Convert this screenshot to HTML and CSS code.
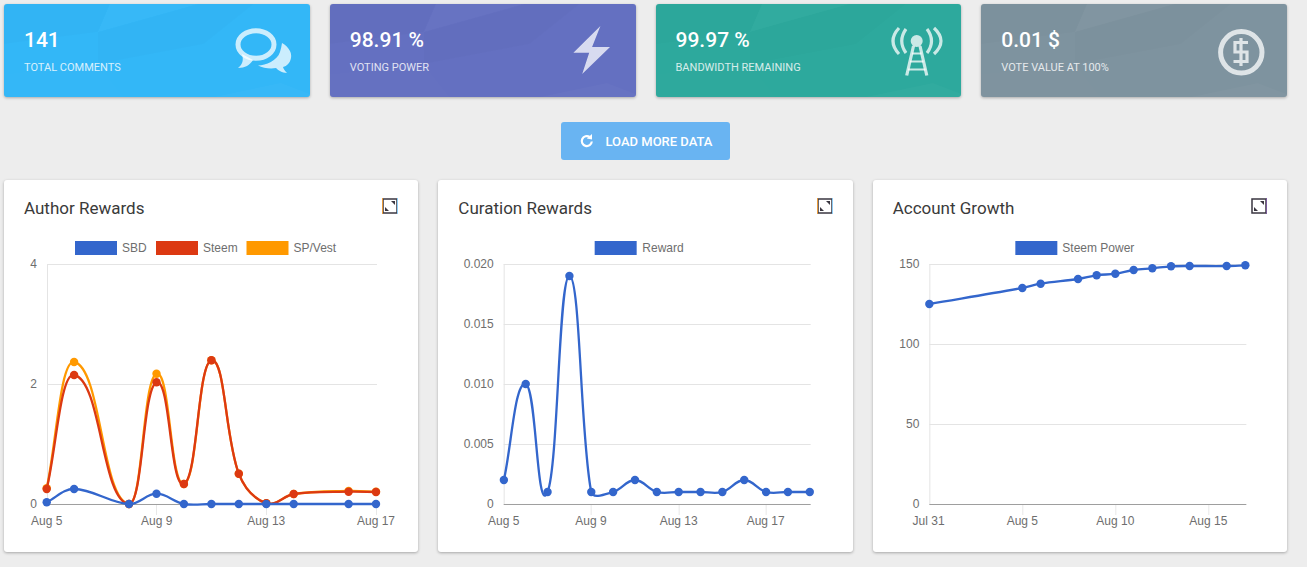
FILE: index.html
```html
<!DOCTYPE html>
<html lang="en">
<head>
<meta charset="utf-8">
<title>Dashboard</title>
<link rel="stylesheet" href="styles.css">
</head>
<body>
<main class="page">
  <section class="stats">
    <article class="stat stat-blue">
      <svg class="poly" viewBox="0 0 306 93" preserveAspectRatio="none"><polygon class="p-dark" points="0,0 106,0 94,28 0,40"/><polygon class="p-light" points="106,0 194,0 94,28"/><polygon class="p-dark" points="94,28 194,0 250,0 200,40 94,60"/><polygon class="p-light" points="210,93 277,79 306,90 306,93"/><polygon class="p-faint" points="0,70 94,60 120,93 0,93"/></svg>
      <div class="stat-text"><div class="stat-value">141</div><div class="stat-label">TOTAL COMMENTS</div></div>
      <svg class="stat-icon" viewBox="234 20 60 60">
        <ellipse class="ic-stroke ic-w5" cx="256" cy="43.5" rx="18" ry="13.7"/>
        <path class="ic-fill" d="M242 53C244 60 242 64 238 67C245 67 250 64 253 59Z"/>
        <path class="ic-fill" d="M282 42C289 46 292 52 291 57C290 62 287 65 283 66C283.500 68 285 70 287 72C282 72 278 69 276 67C270 68 263 67 258 64.500C266 64 277 60 280 51C281 48 281.500 45 282 42Z"/>
      </svg>
    </article>
    <article class="stat stat-indigo">
      <svg class="poly" viewBox="0 0 306 93" preserveAspectRatio="none"><polygon class="p-dark" points="0,0 106,0 94,28 0,40"/><polygon class="p-light" points="106,0 194,0 94,28"/><polygon class="p-dark" points="94,28 194,0 250,0 200,40 94,60"/><polygon class="p-light" points="210,93 277,79 306,90 306,93"/><polygon class="p-faint" points="0,70 94,60 120,93 0,93"/></svg>
      <div class="stat-text"><div class="stat-value">98.91 %</div><div class="stat-label">VOTING POWER</div></div>
      <svg class="stat-icon" viewBox="560 20 60 60">
        <polygon class="ic-fill" points="600.400,25 592.100,46 610,46 582.200,73 589.200,51.700 573.400,51.700"/>
      </svg>
    </article>
    <article class="stat stat-teal">
      <svg class="poly" viewBox="0 0 306 93" preserveAspectRatio="none"><polygon class="p-dark" points="0,0 106,0 94,28 0,40"/><polygon class="p-light" points="106,0 194,0 94,28"/><polygon class="p-dark" points="94,28 194,0 250,0 200,40 94,60"/><polygon class="p-light" points="210,93 277,79 306,90 306,93"/><polygon class="p-faint" points="0,70 94,60 120,93 0,93"/></svg>
      <div class="stat-text"><div class="stat-value">99.97 %</div><div class="stat-label">BANDWIDTH REMAINING</div></div>
      <svg class="stat-icon" viewBox="885 20 60 60">
        <circle class="ic-fill" cx="916.700" cy="40" r="6"/>
        <path class="ic-stroke ic-w3" d="M906 28Q897.500 40 906 52M899 27Q887 40 899 53M927 28Q936 40 927 52M934 27Q948 40 934 53"/>
        <path class="ic-stroke ic-w3" d="M913.500 45L906.700 74.500M920 45L926.800 74.500"/>
        <path class="ic-stroke ic-w2" d="M912 52.500H921.500M910 60.500H923.500M908 68.500H925.500"/>
      </svg>
    </article>
    <article class="stat stat-grey">
      <svg class="poly" viewBox="0 0 306 93" preserveAspectRatio="none"><polygon class="p-dark" points="0,0 106,0 94,28 0,40"/><polygon class="p-light" points="106,0 194,0 94,28"/><polygon class="p-dark" points="94,28 194,0 250,0 200,40 94,60"/><polygon class="p-light" points="210,93 277,79 306,90 306,93"/><polygon class="p-faint" points="0,70 94,60 120,93 0,93"/></svg>
      <div class="stat-text"><div class="stat-value">0.01 $</div><div class="stat-label">VOTE VALUE AT 100%</div></div>
      <svg class="stat-icon" viewBox="1211 20 60 60">
        <circle class="ic-stroke ic-w5" cx="1241.300" cy="51.300" r="20.700"/>
        <path class="ic-stroke ic-w3" d="M1248 41.500H1235V51H1247V60.500H1233.500M1241 37V65"/>
      </svg>
    </article>
  </section>

  <div class="actions">
    <button class="load-btn" type="button">
      <svg class="load-icon" viewBox="0 0 14 14"><path class="load-arc" d="M11.800 7.500A5 5 0 1 1 9.600 2.900"/><polygon class="load-head" points="12,0 12,5.500 6.800,4.500"/></svg>
      <span>LOAD MORE DATA</span>
    </button>
  </div>

  <section class="charts">
    <article class="card">
      <header class="card-head">
        <h2 class="card-title">Author Rewards</h2>
        <svg class="expand" viewBox="0 0 16 16"><rect class="ex-box" x="1" y="1" width="14" height="14"/><line class="ex-orange" x1="0.500" y1="0" x2="0.500" y2="16"/><line class="ex-blue" x1="15.500" y1="0" x2="15.500" y2="16"/><polygon class="ex-tri" points="9,3 13,3 13,7"/><polygon class="ex-tri" points="3,9 3,13 7,13"/></svg>
      </header>
      <svg class="chart" viewBox="4 236 414.330 316">
        <g class="grid"><path d="M47 264.500H377M47 384.500H377M47.500 264V504"/></g>
        <g class="ticks"><path d="M156.500 505V515M266.500 505V515M376.500 505V515"/></g>
        <path class="axis" d="M47 504.500H377"/>
        <rect class="s-blue" x="75" y="241" width="42" height="14"/><text class="legend" x="122" y="252">SBD</text>
        <rect class="s-red" x="156" y="241" width="42" height="14"/><text class="legend" x="203" y="252">Steem</text>
        <rect class="s-orange" x="246.500" y="241" width="42" height="14"/><text class="legend" x="293.500" y="252">SP/Vest</text>
        <g class="ylab"><text x="37" y="268">4</text><text x="37" y="388">2</text><text x="37" y="508">0</text></g>
        <g class="xlab"><text x="46.700" y="525">Aug 5</text><text x="156.700" y="525">Aug 9</text><text x="266.300" y="525">Aug 13</text><text x="376" y="525">Aug 17</text></g>
        <g id="plot-author"></g>
      </svg>
    </article>
    <article class="card">
      <header class="card-head">
        <h2 class="card-title">Curation Rewards</h2>
        <svg class="expand" viewBox="0 0 16 16"><rect class="ex-box" x="1" y="1" width="14" height="14"/><line class="ex-orange" x1="0.500" y1="0" x2="0.500" y2="16"/><line class="ex-blue" x1="15.500" y1="0" x2="15.500" y2="16"/><polygon class="ex-tri" points="9,3 13,3 13,7"/><polygon class="ex-tri" points="3,9 3,13 7,13"/></svg>
      </header>
      <svg class="chart" viewBox="438.330 236 414.330 316">
        <g class="grid"><path d="M504 264.500H811M504 324.500H811M504 384.500H811M504 444.500H811M504.500 264V504"/></g>
        <g class="ticks"><path d="M591.500 505V515M679.500 505V515M766.500 505V515"/></g>
        <path class="axis" d="M504 504.500H811"/>
        <rect class="s-blue" x="595" y="241" width="42" height="14"/><text class="legend" x="642.700" y="252">Reward</text>
        <g class="ylab"><text x="494" y="268">0.020</text><text x="494" y="328">0.015</text><text x="494" y="388">0.010</text><text x="494" y="448">0.005</text><text x="494" y="508">0</text></g>
        <g class="xlab"><text x="504" y="525">Aug 5</text><text x="591.300" y="525">Aug 9</text><text x="679" y="525">Aug 13</text><text x="766" y="525">Aug 17</text></g>
        <g id="plot-curation"></g>
      </svg>
    </article>
    <article class="card">
      <header class="card-head">
        <h2 class="card-title">Account Growth</h2>
        <svg class="expand" viewBox="0 0 16 16"><rect class="ex-box" x="1" y="1" width="14" height="14"/><line class="ex-purple" x1="15.500" y1="0" x2="15.500" y2="16"/><polygon class="ex-tri" points="9,3 13,3 13,7"/><polygon class="ex-tri" points="3,9 3,13 7,13"/></svg>
      </header>
      <svg class="chart" viewBox="872.670 236 414.330 316">
        <g class="grid"><path d="M929 264.500H1246M929 344.500H1246M929 424.500H1246M929.500 264V504"/></g>
        <g class="ticks"><path d="M1022.500 505V515M1115.500 505V515M1208.500 505V515"/></g>
        <path class="axis" d="M929 504.500H1246"/>
        <rect class="s-blue" x="1015" y="241" width="42" height="14"/><text class="legend" x="1062" y="252">Steem Power</text>
        <g class="ylab"><text x="919" y="268">150</text><text x="919" y="348">100</text><text x="919" y="428">50</text><text x="919" y="508">0</text></g>
        <g class="xlab"><text x="928.300" y="525">Jul 31</text><text x="1022" y="525">Aug 5</text><text x="1115" y="525">Aug 10</text><text x="1208" y="525">Aug 15</text></g>
        <g id="plot-growth"></g>
      </svg>
    </article>
  </section>
</main>
<script src="charts.js"></script>
</body>
</html>
```

FILE: styles.css
```css
* { box-sizing: border-box; }
html, body { margin: 0; height: 100%; overflow: hidden; }
body { background: #ededed; font-family: Roboto, "Liberation Sans", sans-serif; }
.page { padding: 4px 20px 0 4px; display: flex; flex-direction: column; }

.stats { display: grid; grid-template-columns: repeat(4, 1fr); gap: 20px; }
.stat { position: relative; height: 93px; border-radius: 3px; overflow: hidden; display: flex; align-items: center; justify-content: space-between; padding: 2px 16px 0 20px; color: #fff; box-shadow: 0 1px 3px rgba(0,0,0,.28); }
.stat-blue { background: #33b7f7; }
.stat-indigo { background: #6470c1; }
.stat-teal { background: #2da99d; }
.stat-grey { background: #7e939f; }
.poly { position: absolute; inset: 0; width: 100%; height: 100%; }
.p-dark { fill: #000; opacity: .012; }
.p-light { fill: #fff; opacity: .025; }
.p-faint { fill: #fff; opacity: .008; }
.stat-text { position: relative; }
.stat-value { font-size: 21px; font-weight: 500; line-height: 24px; }
.stat-label { font-size: 11px; line-height: 14px; margin-top: 9px; opacity: .8; }
.stat-icon { position: relative; width: 60px; height: 60px; margin-top: -2px; }
.ic-fill { fill: #fff; fill-opacity: .75; }
.ic-stroke { fill: none; stroke: #fff; stroke-opacity: .75; }
.ic-w5 { stroke-width: 5px; }
.ic-w3 { stroke-width: 3.200px; }
.ic-w2 { stroke-width: 2.200px; }

.actions { display: flex; justify-content: center; padding: 25px 0 20px; margin-left: -1px; }
.load-btn { width: 169px; height: 38px; border: 0; border-radius: 3px; background: #69b4f2; color: #fff; font-family: inherit; font-size: 13px; font-weight: 500; display: flex; align-items: center; gap: 12px; padding: 0 0 0 19px; opacity: 1; }
.load-icon { width: 14px; height: 14px; flex: none; }
.load-arc { fill: none; stroke: #fff; stroke-width: 2.200px; }
.load-head { fill: #fff; }

.charts { display: grid; grid-template-columns: repeat(3, 1fr); gap: 20px; }
.card { background: #fff; border-radius: 3px; height: 372px; box-shadow: 0 1px 3px rgba(0,0,0,.3); display: flex; flex-direction: column; }
.card-head { height: 56px; flex: none; padding: 18px 20px 0 20px; display: flex; justify-content: space-between; align-items: flex-start; }
.card-title { margin: 0; font-size: 17px; font-weight: 400; line-height: 21px; color: #3a3a3a; }
.expand { width: 16px; height: 16px; }
.ex-box { fill: #fff; stroke: #3a3640; stroke-width: 1.500px; }
.ex-tri { fill: #3a3640; }
.ex-orange { stroke: #e89a3a; stroke-width: 1px; }
.ex-blue { stroke: #8fcdf5; stroke-width: 1px; }
.ex-purple { stroke: #7a5a9a; stroke-width: 1px; }

.chart { display: block; width: 100%; height: 316px; font-family: "Liberation Sans", Arial, sans-serif; font-size: 12px; }
.grid path { fill: none; stroke: #e4e4e4; stroke-width: 1px; }
.ticks path { fill: none; stroke: #e8e8e8; stroke-width: 1px; }
.axis { fill: none; stroke: #9e9e9e; stroke-width: 1px; }
.legend, .ylab text, .xlab text { fill: #6e6e6e; }
.ylab text { text-anchor: end; }
.xlab text { text-anchor: middle; }
.s-blue { fill: #3366cc; }
.s-red { fill: #dc3912; }
.s-orange { fill: #ff9900; }
.line { fill: none; stroke-width: 2.300px; }
.line-blue { stroke: #3366cc; }
.line-red { stroke: #dc3912; }
.line-orange { stroke: #ff9900; }
```

FILE: charts.js
```js
// Draws the line series of the three charts from their data points (page coordinates).
var SVG_NS = 'http://www.w3.org/2000/svg';

function unit(dx, dy) {
  var len = Math.sqrt(dx * dx + dy * dy) || 1;
  return [dx / len, dy / len];
}

function smoothPath(pts) {
  var tangents = pts.map(function (p, i) {
    var a = pts[Math.max(i - 1, 0)];
    var b = pts[Math.min(i + 1, pts.length - 1)];
    return unit(b[0] - a[0], b[1] - a[1]);
  });
  function handle(t, dx, len) {
    var h = 0.35 * len;
    var maxX = 0.5 * dx;
    if (Math.abs(t[0] * h) > maxX) { h = maxX / Math.abs(t[0]); }
    return h;
  }
  var d = 'M' + pts[0][0] + ' ' + pts[0][1];
  for (var i = 0; i < pts.length - 1; i++) {
    var p = pts[i];
    var q = pts[i + 1];
    var dx = q[0] - p[0];
    var len = Math.sqrt(dx * dx + (q[1] - p[1]) * (q[1] - p[1]));
    var h1 = handle(tangents[i], dx, len);
    var h2 = handle(tangents[i + 1], dx, len);
    d += 'C' + (p[0] + tangents[i][0] * h1).toFixed(2) + ' ' + (p[1] + tangents[i][1] * h1).toFixed(2) +
      ' ' + (q[0] - tangents[i + 1][0] * h2).toFixed(2) + ' ' + (q[1] - tangents[i + 1][1] * h2).toFixed(2) +
      ' ' + q[0] + ' ' + q[1];
  }
  return d;
}

function drawSeries(group, xs, ys, color) {
  var pts = xs.map(function (x, i) { return [x, ys[i]]; });
  var path = document.createElementNS(SVG_NS, 'path');
  path.setAttribute('d', smoothPath(pts));
  path.setAttribute('class', 'line line-' + color);
  group.appendChild(path);
  pts.forEach(function (p) {
    var c = document.createElementNS(SVG_NS, 'circle');
    c.setAttribute('cx', p[0]);
    c.setAttribute('cy', p[1]);
    c.setAttribute('r', 4.2);
    c.setAttribute('class', 's-' + color);
    group.appendChild(c);
  });
}

var authorX = [46.7, 74.1, 129, 156.5, 183.9, 211.4, 238.8, 266.3, 293.7, 348.6, 376];
var author = document.getElementById('plot-author');
drawSeries(author, authorX, [488.3, 362, 504, 373.7, 484, 360.3, 473.7, 503.3, 494, 491, 491.7], 'orange');
drawSeries(author, authorX, [489, 375, 504, 382.3, 484, 360.3, 473.7, 503.3, 494, 491.7, 492], 'red');
drawSeries(author, authorX, [502.3, 489, 504, 493.7, 504, 504, 504, 504, 504, 504, 504], 'blue');

var curationValues = [2, 10, 1, 19, 1, 1, 2, 1, 1, 1, 1, 2, 1, 1, 1];
drawSeries(document.getElementById('plot-curation'),
  curationValues.map(function (v, i) { return 504.2 + i * 21.85; }),
  curationValues.map(function (v) { return 504 - v * 12; }), 'blue');

drawSeries(document.getElementById('plot-growth'),
  [929, 1022, 1040.3, 1077.7, 1096.3, 1115, 1133.3, 1152, 1170.7, 1189.3, 1226.3, 1245],
  [304, 288, 283.7, 279, 275.3, 273.7, 270, 268.3, 266.3, 266, 266, 265.3], 'blue');
```
